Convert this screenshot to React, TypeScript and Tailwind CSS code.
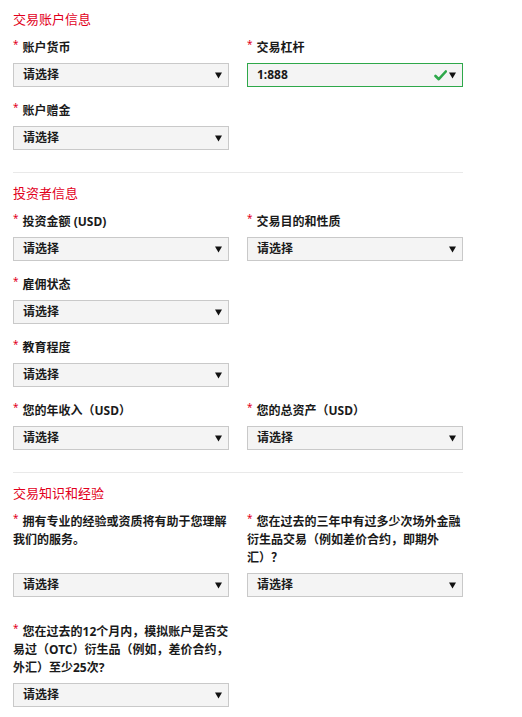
import type { ReactNode } from "react";

type FieldProps = {
  label: ReactNode;
  value?: string;
  valid?: boolean;
};

function Arrow() {
  return (
    <svg width="7" height="7" viewBox="0 0 7 7" className="shrink-0">
      <polygon points="0,0.5 7,0.5 3.5,6.5" fill="#111" />
    </svg>
  );
}

function Check() {
  return (
    <svg width="13" height="11" viewBox="0 0 13 11" className="shrink-0 mr-[1px]">
      <path d="M1.5 6 L4.8 9.2 L11.8 1.5" fill="none" stroke="#2ea84a" strokeWidth="2.6" strokeLinecap="round" strokeLinejoin="round" />
    </svg>
  );
}

// One labelled select; the select sits at the bottom so fields in a row line up.
function Field({ label, value = "请选择", valid = false }: FieldProps) {
  return (
    <div className="flex flex-col">
      <div className="text-[12px] leading-[18px] font-bold text-[#1a1a1a]">
        <span className="align-top text-[#e2001c] text-[10px] leading-[10px] font-normal mr-[4px]">*</span>
        {label}
      </div>
      <div className="mt-auto pt-[6px]">
        <div
          className={
            valid
              ? "h-[24px] flex items-center gap-[1px] border border-[#2ea84a] bg-[#f4f4f4] pl-[9px] pr-[6px]"
              : "h-[24px] flex items-center border border-[#c9c9c9] bg-[#f4f4f4] pl-[9px] pr-[6px]"
          }
        >
          <span className="flex-1 text-[12px] font-bold text-[#1a1a1a]">{value}</span>
          {valid && <Check />}
          <Arrow />
        </div>
      </div>
    </div>
  );
}

function SectionTitle({ children }: { children: ReactNode }) {
  return <h2 className="text-[13px] leading-[18px] text-[#e2001c]">{children}</h2>;
}

function Divider() {
  return <div className="mt-[22px] mb-[11px] h-px w-[450px] bg-[#e9e9e9]" />;
}

export default function App() {
  return (
    <div className="min-h-screen bg-white font-['Noto_Sans','Noto_Sans_CJK_SC',sans-serif]">
      <div className="pl-[13px] pt-[10px] pb-[20px] w-[463px]">
        <SectionTitle>交易账户信息</SectionTitle>
        <div className="mt-[11px] grid grid-cols-[216px_216px] gap-x-[18px] gap-y-[15px]">
          <Field label="账户货币" />
          <Field label="交易杠杆" value="1:888" valid />
          <Field label="账户赠金" />
        </div>

        <Divider />

        <SectionTitle>投资者信息</SectionTitle>
        <div className="mt-[11px] grid grid-cols-[216px_216px] gap-x-[18px] gap-y-[15px]">
          <Field label="投资金额 (USD)" />
          <Field label="交易目的和性质" />
          <Field label="雇佣状态" />
          <div />
          <Field label="教育程度" />
          <div />
          <Field label="您的年收入（USD）" />
          <Field label="您的总资产（USD）" />
        </div>

        <Divider />

        <SectionTitle>交易知识和经验</SectionTitle>
        <div className="mt-[11px] grid grid-cols-[216px_216px] gap-x-[18px] gap-y-[26px]">
          <Field label="拥有专业的经验或资质将有助于您理解我们的服务。" />
          <Field label="您在过去的三年中有过多少次场外金融衍生品交易（例如差价合约，即期外汇）？" />
          <Field label="您在过去的12个月内，模拟账户是否交易过（OTC）衍生品（例如，差价合约，外汇）至少25次?" />
        </div>
      </div>
    </div>
  );
}
